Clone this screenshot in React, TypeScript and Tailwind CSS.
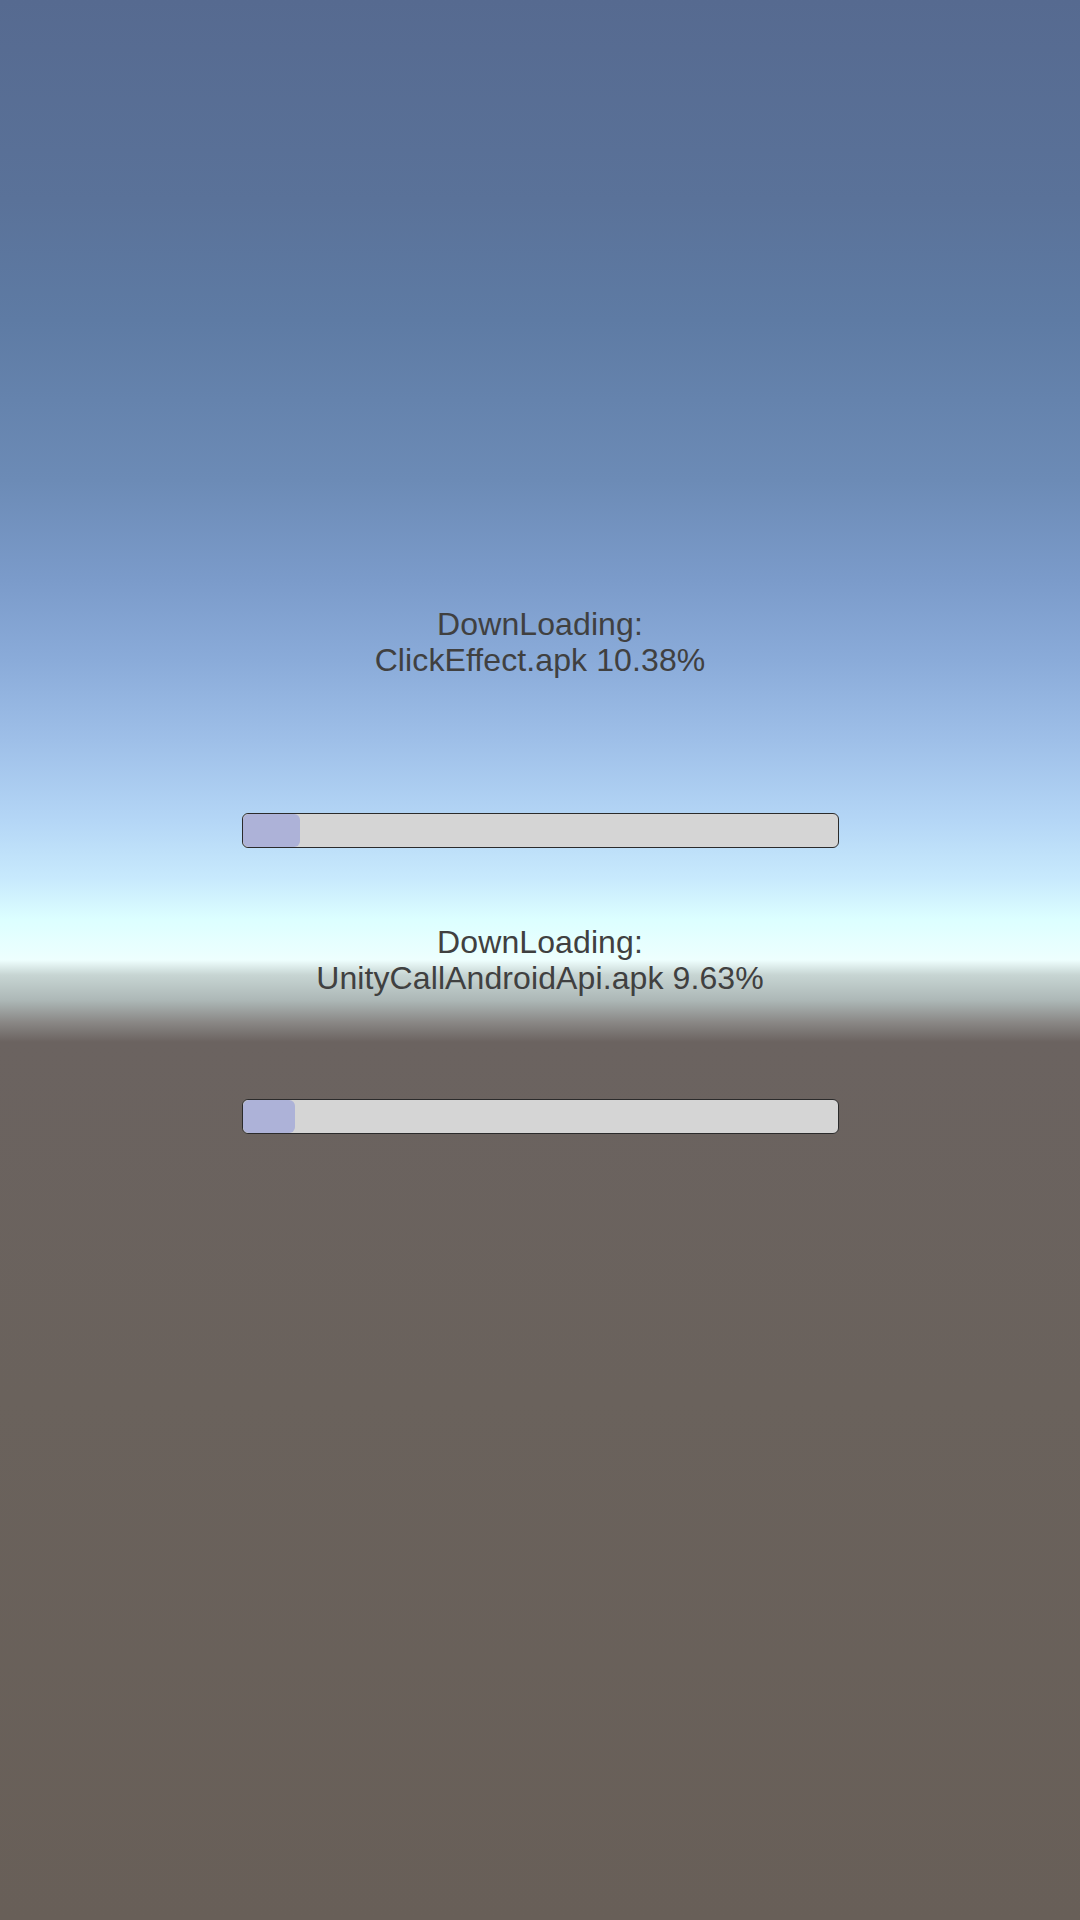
import React from "react";

const downloads = [
  { name: "ClickEffect.apk", pct: "10.38%", fill: "w-[57px]" },
  { name: "UnityCallAndroidApi.apk", pct: "9.63%", fill: "w-[52px]" },
];

function ProgressBar({ fill }: { fill: string }) {
  return (
    <div className="w-[597px] h-[35px] rounded-[6px] border border-[#2b2b2b] bg-[#d5d5d5] overflow-hidden flex">
      <div className={`${fill} h-full rounded-[6px] bg-[#adb2d8]`} />
    </div>
  );
}

function Label({ name, pct }: { name: string; pct: string }) {
  return (
    <div className="text-center text-[32px] leading-[36px] text-[#404040] tracking-[0.1px] font-['Liberation_Sans',Arial,sans-serif]">
      <div>DownLoading:</div>
      <div>
        {name} {pct}
      </div>
    </div>
  );
}

export default function App() {
  return (
    <main className="w-full h-[1920px] overflow-hidden bg-[linear-gradient(to_bottom,#566a90_0px,#5a7299_200px,#5e7ba4_320px,#6c8bb6_480px,#7b9bca_580px,#8aabd9_660px,#9ebfe8_740px,#b4d6f6_820px,#c8eafd_880px,#dcffff_920px,#eefffe_960px,#c7d5d3_975px,#adb8b7_1000px,#8a8886_1022px,#6b6360_1042px,#6a625c_1400px,#685f58_1920px)]">
      <div className="flex flex-col items-center pt-[606px]">
        <Label name={downloads[0].name} pct={downloads[0].pct} />
        <div className="mt-[135px]">
          <ProgressBar fill={downloads[0].fill} />
        </div>
        <div className="mt-[76px]">
          <Label name={downloads[1].name} pct={downloads[1].pct} />
        </div>
        <div className="mt-[103px]">
          <ProgressBar fill={downloads[1].fill} />
        </div>
      </div>
    </main>
  );
}
